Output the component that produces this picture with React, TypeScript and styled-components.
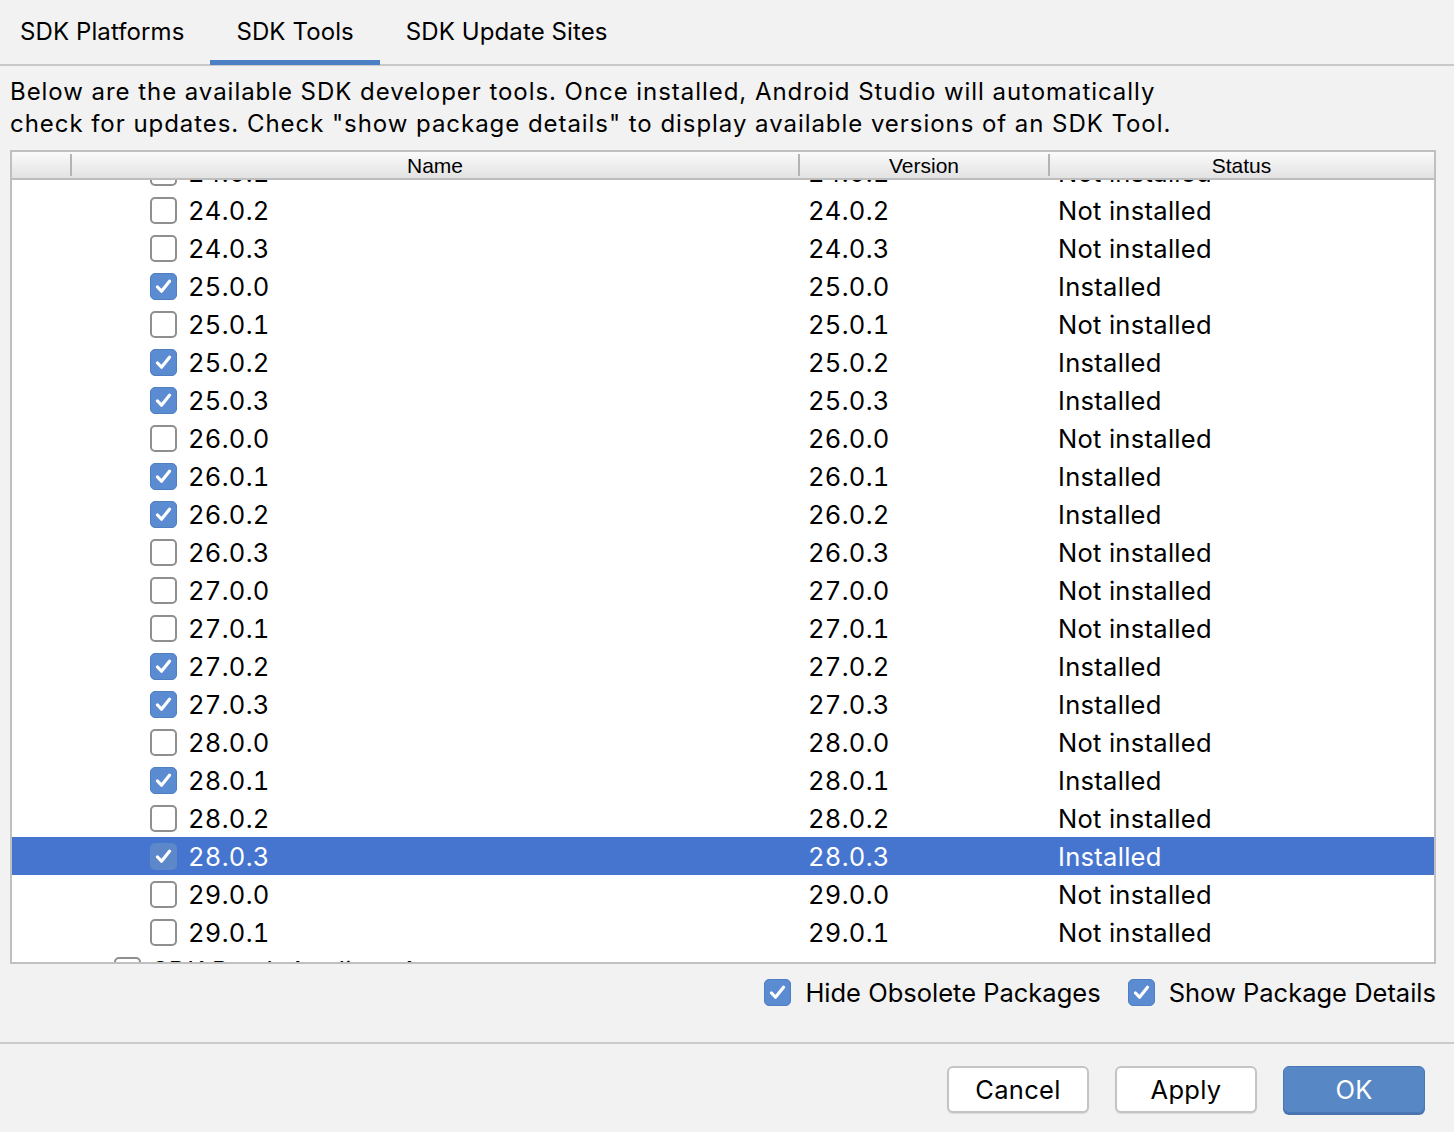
import React from "react";
import styled, { createGlobalStyle, css } from "styled-components";

const GlobalStyle = createGlobalStyle`
  html, body { margin: 0; padding: 0; background: #f2f2f2; }
  body { font-family: Inter, "Noto Sans", "Liberation Sans", sans-serif; color: #000; }
  * { box-sizing: border-box; }
`;

const Page = styled.div`
  width: 1454px;
  height: 1132px;
  background: #f2f2f2;
  display: flex;
  flex-direction: column;
  overflow: hidden;
`;

const TabBar = styled.div`
  height: 66px;
  display: flex;
  align-items: stretch;
  border-bottom: 2px solid #c9c9c9;
`;

const Tab = styled.div<{ $active?: boolean }>`
  position: relative;
  display: flex;
  align-items: center;
  padding: 0 26px 2px;
  font-size: 24px;
  letter-spacing: 0.1px;
  color: #000;
  &:first-child { padding-left: 20px; }
  ${(p) =>
    p.$active &&
    css`
      &::after {
        content: "";
        position: absolute;
        left: 0;
        right: 0;
        bottom: -1px;
        height: 5px;
        background: #4d7fc4;
      }
    `}
`;

const Description = styled.p`
  margin: 10px 0 0;
  padding: 0 10px;
  font-size: 24px;
  letter-spacing: 0.95px;
  line-height: 32px;
  height: 74px;
  white-space: nowrap;
`;

const Table = styled.div`
  margin: 0 18px 0 10px;
  border: 2px solid #c0c0c0;
  background: #fff;
  display: flex;
  flex-direction: column;
  height: 814px;
`;

const cols = css`
  display: grid;
  grid-template-columns: 59px 728px 250px 1fr;
`;

const Header = styled.div`
  ${cols};
  height: 28px;
  border-bottom: 2px solid #bdbdbd;
  background: linear-gradient(#fbfbfb, #e2e2e2);
  font-family: "Liberation Sans", Arial, sans-serif;
  font-size: 21px;
`;

const HeaderCell = styled.div<{ $first?: boolean }>`
  position: relative;
  display: flex;
  align-items: center;
  justify-content: center;
  padding-top: 2px;
  ${(p) =>
    !p.$first &&
    css`
      &::before {
        content: "";
        position: absolute;
        left: -1px;
        top: 2px;
        bottom: 2px;
        width: 2px;
        background: #b4b4b4;
      }
    `}
`;

const Body = styled.div`
  flex: 1;
  overflow: hidden;
`;

const RowList = styled.div`
  margin-top: -27px;
`;

const Row = styled.div<{ $selected?: boolean }>`
  ${cols};
  height: 38px;
  align-items: center;
  font-size: 25.5px;
  letter-spacing: 0.3px;
  font-feature-settings: "tnum" 1;
  background: ${(p) => (p.$selected ? "#4675d0" : "#fff")};
  color: ${(p) => (p.$selected ? "#fff" : "#000")};
`;

const NameCell = styled.div<{ $indent: number }>`
  display: flex;
  align-items: center;
  gap: 11px;
  padding-left: ${(p) => p.$indent}px;
  white-space: nowrap;
`;

const TextCell = styled.div`
  padding-left: 9px;
  white-space: nowrap;
`;

const Box = styled.span<{ $checked?: boolean; $onSelected?: boolean }>`
  flex: none;
  width: 27px;
  height: 27px;
  border-radius: 5px;
  display: inline-flex;
  align-items: center;
  justify-content: center;
  ${(p) =>
    p.$onSelected
      ? css`
          background: #5c87c9;
        `
      : p.$checked
      ? css`
          background: #5b8bd0;
          border: 1px solid #4f7fc3;
        `
      : css`
          background: #fff;
          border: 2px solid #8f8f8f;
        `}
`;

const Check = () => (
  <svg width="17" height="15" viewBox="0 0 17 15" fill="none">
    <path d="M2.5 8 L6.5 12.2 L14.5 2.2" stroke="#fff" strokeWidth="3.2" strokeLinecap="round" strokeLinejoin="round" />
  </svg>
);

const CheckBox = ({ checked, onSelected }: { checked: boolean; onSelected?: boolean }) => (
  <Box $checked={checked} $onSelected={onSelected && checked}>
    {checked && <Check />}
  </Box>
);

const Options = styled.div`
  height: 78px;
  display: flex;
  justify-content: flex-end;
  align-items: center;
  gap: 27px;
  padding: 0 18px 22px 0;
`;

const Option = styled.label`
  display: flex;
  align-items: center;
  gap: 14px;
  font-size: 25.5px;
`;

const Divider = styled.div`
  height: 2px;
  background: #cbcbcb;
`;

const Footer = styled.div`
  flex: 1;
  display: flex;
  justify-content: flex-end;
  align-items: flex-start;
  gap: 26px;
  padding: 22px 29px 0 0;
`;

const Button = styled.button<{ $primary?: boolean }>`
  width: 142px;
  height: 47px;
  border-radius: 6px;
  font-family: Inter, "Noto Sans", sans-serif;
  font-size: 25.5px;
  letter-spacing: 0.3px;
  cursor: pointer;
  ${(p) =>
    p.$primary
      ? css`
          background: #5787c5;
          border: 1px solid #4a77b6;
          color: #fff;
          box-shadow: 0 2px 0 #4a74ad;
        `
      : css`
          background: #fff;
          border: 2px solid #c4c4c4;
          color: #000;
          box-shadow: 0 1px 1px rgba(0, 0, 0, 0.1);
        `}
`;

type Item = { v: string; on: boolean; sel?: boolean };

const items: Item[] = [
  { v: "24.0.1", on: false },
  { v: "24.0.2", on: false },
  { v: "24.0.3", on: false },
  { v: "25.0.0", on: true },
  { v: "25.0.1", on: false },
  { v: "25.0.2", on: true },
  { v: "25.0.3", on: true },
  { v: "26.0.0", on: false },
  { v: "26.0.1", on: true },
  { v: "26.0.2", on: true },
  { v: "26.0.3", on: false },
  { v: "27.0.0", on: false },
  { v: "27.0.1", on: false },
  { v: "27.0.2", on: true },
  { v: "27.0.3", on: true },
  { v: "28.0.0", on: false },
  { v: "28.0.1", on: true },
  { v: "28.0.2", on: false },
  { v: "28.0.3", on: true, sel: true },
  { v: "29.0.0", on: false },
  { v: "29.0.1", on: false },
];

export default function App() {
  return (
    <Page>
      <GlobalStyle />
      <TabBar>
        <Tab>SDK Platforms</Tab>
        <Tab $active>SDK Tools</Tab>
        <Tab>SDK Update Sites</Tab>
      </TabBar>
      <Description>
        Below are the available SDK developer tools. Once installed, Android Studio will automatically
        <br />
        check for updates. Check "show package details" to display available versions of an SDK Tool.
      </Description>
      <Table>
        <Header>
          <HeaderCell $first />
          <HeaderCell>Name</HeaderCell>
          <HeaderCell>Version</HeaderCell>
          <HeaderCell>Status</HeaderCell>
        </Header>
        <Body>
          <RowList>
            {items.map((it) => (
              <Row key={it.v} $selected={it.sel}>
                <div />
                <NameCell $indent={79}>
                  <CheckBox checked={it.on} onSelected={it.sel} />
                  {it.v}
                </NameCell>
                <TextCell>{it.v}</TextCell>
                <TextCell>{it.on ? "Installed" : "Not installed"}</TextCell>
              </Row>
            ))}
            <Row>
              <div />
              <NameCell $indent={43}>
                <CheckBox checked={false} />
                SDK Patch Applier v4
              </NameCell>
              <TextCell />
              <TextCell />
            </Row>
          </RowList>
        </Body>
      </Table>
      <Options>
        <Option>
          <CheckBox checked />
          Hide Obsolete Packages
        </Option>
        <Option>
          <CheckBox checked />
          Show Package Details
        </Option>
      </Options>
      <Divider />
      <Footer>
        <Button>Cancel</Button>
        <Button>Apply</Button>
        <Button $primary>OK</Button>
      </Footer>
    </Page>
  );
}
